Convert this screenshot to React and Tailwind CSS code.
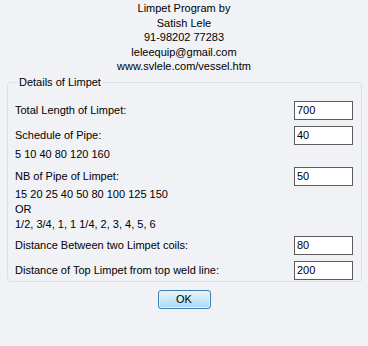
import React from 'react';

const rows = [
  { label: 'Total Length of Limpet:', value: '700', gap: '' },
  { label: 'Schedule of Pipe:', value: '40', gap: 'mt-[6px]', notes: ['5 10 40 80 120 160'], notesGap: 'mt-[2px]' },
  { label: 'NB of Pipe of Limpet:', value: '50', gap: 'mt-[5px]', notes: ['15 20 25 40 50 80 100 125 150', 'OR', '1/2, 3/4, 1, 1 1/4, 2, 3, 4, 5, 6'], notesGap: 'mt-[1px]' },
  { label: 'Distance Between two Limpet coils:', value: '80', gap: 'mt-[4px]' },
  { label: 'Distance of Top Limpet from top weld line:', value: '200', gap: 'mt-[6px]' },
];

const Field = ({ label, value }) => (
  <div className="flex items-center justify-between h-[19px]">
    <span>{label}</span>
    <input
      readOnly
      value={value}
      className="w-[59px] h-[19px] bg-white border border-[#5c5c5c] px-[2px] text-[11px] text-black outline-none"
      style={{ fontFamily: 'inherit' }}
    />
  </div>
);

export default function App() {
  return (
    <div
      className="w-[368px] h-[346px] bg-[#f0f2f6] text-black text-[11px] overflow-hidden"
      style={{ fontFamily: '"Liberation Sans", Arial, sans-serif' }}
    >
      <div className="flex flex-col items-center leading-[14.5px] pt-[1px]">
        <div>Limpet Program by</div>
        <div>Satish Lele</div>
        <div>91-98202 77283</div>
        <div>leleequip@gmail.com</div>
        <div>www.svlele.com/vessel.htm</div>
      </div>

      <fieldset className="mx-[7px] mt-[2px] w-[355px] border border-[#dce1e9] rounded-[3px] pl-[7px] pr-[8px] pb-[1px]">
        <legend className="px-[2px] ml-[2px] leading-[13px]">Details of Limpet</legend>
        <div className="flex flex-col pt-[12px]">
          {rows.map((r, i) => (
            <div key={i} className={r.gap}>
              <Field label={r.label} value={r.value} />
              {r.notes && (
                <div className={`flex flex-col leading-[15px] ${r.notesGap}`}>
                  {r.notes.map((n) => (
                    <div key={n}>{n}</div>
                  ))}
                </div>
              )}
            </div>
          ))}
        </div>
      </fieldset>

      <div className="flex justify-center mt-[8px]">
        <button className="w-[53px] h-[19px] rounded-[3px] border border-[#3c7fb1] bg-gradient-to-b from-[#eaf6fd] to-[#a7d9f5] shadow-[inset_0_0_0_1px_#dff3fd] leading-none text-[11px]">
          OK
        </button>
      </div>
    </div>
  );
}
